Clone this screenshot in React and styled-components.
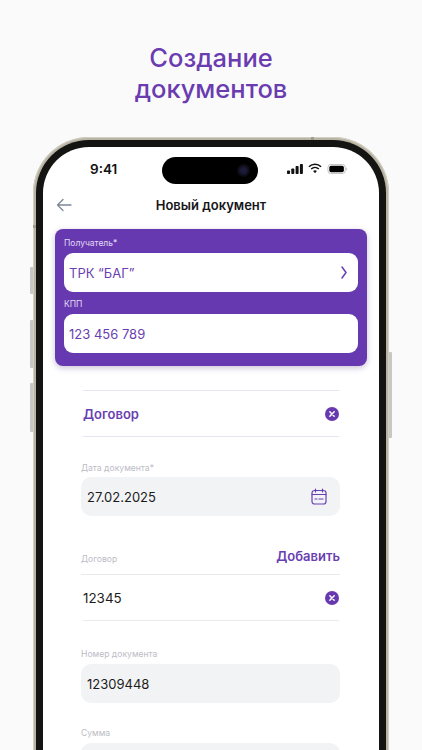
import React from 'react';
import styled, { createGlobalStyle } from 'styled-components';

const Global = createGlobalStyle`
  html, body { margin: 0; padding: 0; background: #fafafa; }
  body { font-family: Inter, "Noto Sans", sans-serif; -webkit-font-smoothing: antialiased; }
  * { box-sizing: border-box; }
`;

const Page = styled.div`
  width: 422px;
  height: 750px;
  overflow: hidden;
  background: #fafafa;
  padding-top: 42px;
`;

const Heading = styled.h1`
  margin: 0;
  height: 62px;
  font-size: 25.5px;
  line-height: 31px;
  font-weight: 500;
  text-align: center;
  color: #6a3cb0;
`;

const PhoneBody = styled.div`
  position: relative;
  width: 356px;
  height: 700px;
  margin: 33px 0 0 33px;
  padding: 3px;
  border-radius: 56px 56px 0 0;
  background: #b8b4a4;
  box-shadow: inset 0 0 0 1px #d2cfc3;
`;

const SideButton = styled.span`
  position: absolute;
  top: ${p => p.$top}px;
  ${p => (p.$right ? 'right: -3px;' : 'left: -3px;')}
  width: 3px;
  height: ${p => p.$height}px;
  background: #c9c7c3;
  border-radius: ${p => (p.$right ? '0 1px 1px 0' : '1px 0 0 1px')};
`;

const AntennaBand = styled.span`
  position: absolute;
  background: #9d9a8e;
  ${p => (p.$top ? 'top: 0; left: 278px; width: 3px; height: 3px;' : 'top: 88px; left: 0; width: 3px; height: 3px;')}
`;

const Bezel = styled.div`
  height: 100%;
  padding: 7px;
  border-radius: 53px 53px 0 0;
  background: #141412;
`;

const Screen = styled.div`
  position: relative;
  height: 100%;
  border-radius: 46px 46px 0 0;
  background: #fff;
  overflow: hidden;
`;

const StatusBar = styled.div`
  height: 43px;
  display: flex;
  align-items: center;
  justify-content: space-between;
  padding: 0 31px 0 47px;
  font-size: 13.5px;
  font-weight: 600;
  color: #111;
`;

const StatusIcons = styled.div`
  display: flex;
  align-items: center;
  gap: 5px;
`;

const Island = styled.div`
  position: absolute;
  top: 10px;
  left: 119px;
  width: 96px;
  height: 27px;
  border-radius: 14px;
  background: #000;
`;

const Camera = styled.span`
  position: absolute;
  top: 7px;
  right: 8px;
  width: 13px;
  height: 13px;
  border-radius: 50%;
  background: radial-gradient(circle, #1c1c3a 0 25%, #0b0b14 60%, #050508 100%);
`;

const Header = styled.div`
  position: relative;
  height: 30px;
  display: flex;
  align-items: center;
  justify-content: center;
  font-size: 13px;
  font-weight: 600;
  color: #16161a;
`;

const BackButton = styled.span`
  position: absolute;
  left: 13px;
  top: 8px;
  display: flex;
  color: #7d8799;
`;

const RecipientCard = styled.div`
  margin: 9px 12px 0 12px;
  height: 137px;
  padding: 8px 9px 0;
  border-radius: 8px;
  background: #6639b0;
  box-shadow: 0 2px 6px rgba(60, 40, 110, 0.28);
`;

const CardLabel = styled.div`
  height: 12px;
  line-height: 12px;
  font-size: 8.5px;
  color: #e3d9f3;
  margin-bottom: 4px;
`;

const CardInput = styled.div`
  height: 39px;
  margin-bottom: 6px;
  padding: 0 11px 0 5px;
  display: flex;
  align-items: center;
  justify-content: space-between;
  border-radius: 9px;
  background: #fff;
  font-size: 13px;
  color: #6a3fb2;
`;

const Form = styled.div`
  margin-top: 24px;
  padding: 0 39px 0 38px;
`;

const DocRow = styled.div`
  margin: 0 1px 0 2px;
  height: 47px;
  display: flex;
  align-items: center;
  justify-content: space-between;
  border-top: 1px solid #e6e6ee;
  border-bottom: 1px solid #e6e6ee;
  font-size: 13px;
  font-weight: 600;
  color: #6a3fb2;
`;

const FieldLabel = styled.div`
  height: 12px;
  line-height: 12px;
  margin-top: ${p => p.$top}px;
  margin-bottom: ${p => p.$bottom}px;
  font-size: 8.6px;
  color: #bcbcc6;
`;

const GrayInput = styled.div`
  height: 39px;
  padding: 0 13px 0 6px;
  display: flex;
  align-items: center;
  justify-content: space-between;
  border-radius: 10px;
  background: #f2f3f5;
  font-size: 13px;
  color: #1c1c20;
`;

const ContractHead = styled.div`
  margin-top: 30px;
  height: 29px;
  display: flex;
  align-items: flex-start;
  justify-content: space-between;
  border-bottom: 1px solid #e9e9ee;
`;

const ContractLabel = styled.span`
  margin-top: 7px;
  font-size: 8.6px;
  line-height: 12px;
  color: #bcbcc6;
`;

const AddLink = styled.span`
  font-size: 13px;
  line-height: 20px;
  font-weight: 600;
  color: #6a3fb2;
`;

const ContractRow = styled.div`
  margin: 0 1px 0 2px;
  height: 46px;
  display: flex;
  align-items: center;
  justify-content: space-between;
  border-bottom: 1px solid #e9e9ee;
  font-size: 13.4px;
  color: #1c1c20;
`;

const ClearIcon = () => (
  <svg width="14" height="14" viewBox="0 0 14 14">
    <circle cx="7" cy="7" r="7" fill="#6639b0" />
    <path d="M4.8 4.8l4.4 4.4M9.2 4.8l-4.4 4.4" stroke="#fff" strokeWidth="1.5" strokeLinecap="round" />
  </svg>
);

const CalendarIcon = () => (
  <svg width="16" height="17" viewBox="0 0 16 17" fill="none" stroke="#6a3fb2" strokeWidth="1.2" strokeLinecap="round">
    <rect x="1" y="2.5" width="14" height="13.5" rx="2.5" />
    <path d="M1 6.5h14M4.5 1v3M11.5 1v3M4 11h2M8 11h4" />
  </svg>
);

const Chevron = () => (
  <svg width="6" height="13" viewBox="0 0 6 13" fill="none" stroke="#6a3fb2" strokeWidth="1.5" strokeLinecap="round" strokeLinejoin="round">
    <path d="M1 1l4 5.5L1 12" />
  </svg>
);

const BackArrow = () => (
  <svg width="16" height="14" viewBox="0 0 16 14" fill="none" stroke="currentColor" strokeWidth="1.3" strokeLinecap="round" strokeLinejoin="round">
    <path d="M15 7H1.5M7 1.5L1.5 7 7 12.5" />
  </svg>
);

const Signal = () => (
  <svg width="16" height="10" viewBox="0 0 16 10" fill="#111">
    <rect x="0" y="6.5" width="3" height="3.5" rx="0.8" />
    <rect x="4.3" y="4.5" width="3" height="5.5" rx="0.8" />
    <rect x="8.6" y="2" width="3" height="8" rx="0.8" />
    <rect x="12.9" y="0" width="3" height="10" rx="0.8" />
  </svg>
);

const Wifi = () => (
  <svg width="14" height="11" viewBox="0 0 15 11" fill="none" stroke="#111" strokeWidth="1.6">
    <path d="M1 3.6a9.4 9.4 0 0 1 13 0" />
    <path d="M3.4 6a6 6 0 0 1 8.2 0" />
    <path d="M7.5 10.6L5.5 8.2a3 3 0 0 1 4 0z" fill="#111" stroke="none" />
  </svg>
);

const Battery = () => (
  <svg width="21" height="10" viewBox="0 0 22 11">
    <rect x="0.5" y="0.5" width="19" height="10" rx="3" fill="none" stroke="#bdbdbd" />
    <rect x="2" y="2" width="16" height="7" rx="1.8" fill="#000" />
    <path d="M20.6 3.8c.8.3 1.2 1 1.2 1.7s-.4 1.4-1.2 1.7z" fill="#bdbdbd" />
  </svg>
);

export default function App() {
  return (
    <Page>
      <Global />
      <Heading>
        Создание
        <br />
        документов
      </Heading>
      <PhoneBody>
        <AntennaBand $top />
        <AntennaBand />
        <SideButton $top={130} $height={27} />
        <SideButton $top={183} $height={48} />
        <SideButton $top={246} $height={49} />
        <SideButton $right $top={215} $height={86} />
        <Bezel>
          <Screen>
            <StatusBar>
              <span>9:41</span>
              <StatusIcons>
                <Signal />
                <Wifi />
                <Battery />
              </StatusIcons>
            </StatusBar>
            <Island>
              <Camera />
            </Island>
            <Header>
              <BackButton>
                <BackArrow />
              </BackButton>
              Новый документ
            </Header>
            <RecipientCard>
              <CardLabel>Получатель*</CardLabel>
              <CardInput>
                ТРК “БАГ”
                <Chevron />
              </CardInput>
              <CardLabel>КПП</CardLabel>
              <CardInput>123 456 789</CardInput>
            </RecipientCard>
            <Form>
              <DocRow>
                Договор
                <ClearIcon />
              </DocRow>
              <FieldLabel $top={25} $bottom={3}>Дата документа*</FieldLabel>
              <GrayInput>
                27.02.2025
                <CalendarIcon />
              </GrayInput>
              <ContractHead>
                <ContractLabel>Договор</ContractLabel>
                <AddLink>Добавить</AddLink>
              </ContractHead>
              <ContractRow>
                12345
                <ClearIcon />
              </ContractRow>
              <FieldLabel $top={27} $bottom={4}>Номер документа</FieldLabel>
              <GrayInput>12309448</GrayInput>
              <FieldLabel $top={24} $bottom={4}>Сумма</FieldLabel>
              <GrayInput />
            </Form>
          </Screen>
        </Bezel>
      </PhoneBody>
    </Page>
  );
}
